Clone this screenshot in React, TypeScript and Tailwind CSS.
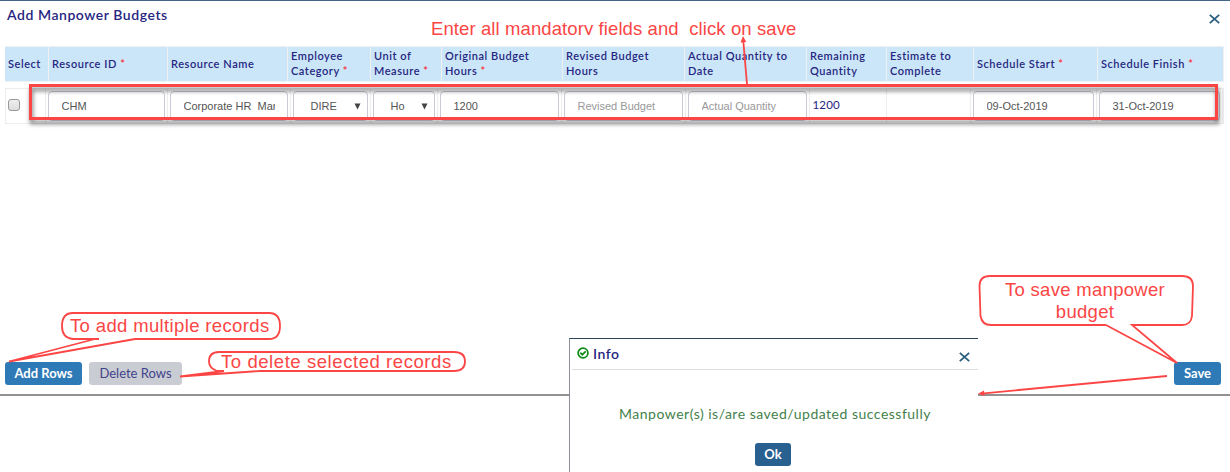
import type { ReactNode } from "react";

const headers: { lines: string[]; required?: boolean }[] = [
  { lines: ["Select"] },
  { lines: ["Resource ID"], required: true },
  { lines: ["Resource Name"] },
  { lines: ["Employee", "Category"], required: true },
  { lines: ["Unit of", "Measure"], required: true },
  { lines: ["Original Budget", "Hours"], required: true },
  { lines: ["Revised Budget", "Hours"] },
  { lines: ["Actual Quantity to", "Date"] },
  { lines: ["Remaining", "Quantity"] },
  { lines: ["Estimate to", "Complete"] },
  { lines: ["Schedule Start"], required: true },
  { lines: ["Schedule Finish"], required: true },
];

function Cell({ children }: { children?: ReactNode }) {
  return <div className="flex min-w-0 border-r border-[#ededf0] pt-[2px] pr-[2px] pl-[2px]">{children}</div>;
}

function Field({ value, placeholder }: { value?: string; placeholder?: string }) {
  return (
    <input
      defaultValue={value}
      placeholder={placeholder}
      className="h-[30px] w-full min-w-0 rounded-[4px] border border-[#c8c9d9] bg-white px-[12.5px] font-['Liberation_Sans',sans-serif] text-[11px] tracking-normal text-[#555] placeholder:text-[#999]"
    />
  );
}

function Picker({ value }: { value: string }) {
  return (
    <button className="flex h-[30px] w-full items-center justify-between rounded-[4px] border border-[#c8c9d9] bg-white pr-[6px] pl-[16.5px] font-['Liberation_Sans',sans-serif] text-[11px] tracking-normal text-[#555]">
      {value}
      <svg width="7" height="7" viewBox="0 0 7 7" fill="#444">
        <path d="M0.5 0.5H6.5L3.5 6.5Z" />
      </svg>
    </button>
  );
}

function Close({ className }: { className?: string }) {
  return (
    <svg width="11" height="10" viewBox="0 0 11 10" className={className} stroke="#2a607f" strokeWidth="1.8" fill="none">
      <path d="M0.8 0.8L10.2 9.2M10.2 0.8L0.8 9.2" />
    </svg>
  );
}

export default function App() {
  return (
    <div className="relative h-[472px] w-[1230px] overflow-hidden bg-white font-[Lato,sans-serif] text-[#262680]">
      <main className="flex h-[396px] flex-col border-t border-b-2 border-t-[#446688] border-b-[#929292]">
        <header className="flex h-[45px] justify-between pt-[6px] pr-[10px] pl-[7px]">
          <h1 className="text-[14px] leading-[16px] font-semibold tracking-[0.55px]">Add Manpower Budgets</h1>
          <Close className="mt-[7px]" />
        </header>
        <div className="ml-[5px] grid h-[36px] w-[1219px] grid-cols-[44px_119px_120px_83px_71px_121px_122px_122px_80px_87px_124px_126px] border-y border-[#f0f0f0] bg-[#cbe6f9] text-[11px] leading-[15px] font-semibold tracking-[0.55px]">
          {headers.map((h) => (
            <div key={h.lines.join()} className="flex flex-col justify-center border-r border-[#f0f0f0] pb-[2px] pl-[3px] whitespace-nowrap">
              {h.lines.map((line, i) => (
                <span key={line}>
                  {line}
                  {h.required && i === h.lines.length - 1 && <span className="font-semibold text-red-500"> *</span>}
                </span>
              ))}
            </div>
          ))}
        </div>
        <div className="mt-[6px] ml-[5px] grid h-[36px] w-[1219px] grid-cols-[40px_122px_123px_80px_67px_124px_124px_124px_77px_84px_126px_126px] border border-[#ededf0]">
          <Cell>
            <span className="mt-[8px] h-[12px] w-[12px] rounded-[3px] border border-[#999] bg-linear-to-b from-[#eee] to-[#ddd]" />
          </Cell>
          <Cell><Field value="CHM" /></Cell>
          <Cell><Field value="Corporate HR  Manager" /></Cell>
          <Cell><Picker value="DIRE" /></Cell>
          <Cell><Picker value="Ho" /></Cell>
          <Cell><Field value="1200" /></Cell>
          <Cell><Field placeholder="Revised Budget" /></Cell>
          <Cell><Field placeholder="Actual Quantity" /></Cell>
          <Cell><span className="mt-[6px] ml-[0.5px] text-[11.5px] leading-[16px] tracking-[0.2px]">1200</span></Cell>
          <Cell />
          <Cell><Field value="09-Oct-2019" /></Cell>
          <Cell><Field value="31-Oct-2019" /></Cell>
        </div>
        <footer className="mt-auto flex h-[32px] px-[5px] pr-[9px] text-[13px]">
          <button className="h-[23px] w-[77px] rounded-[3px] bg-[#2e7ab6] font-bold text-white">Add Rows</button>
          <button className="ml-[7px] h-[23px] w-[93px] rounded-[3px] bg-[#c9cdd3] text-[#42428b]">Delete Rows</button>
          <button className="ml-auto h-[23px] w-[47px] rounded-[3px] bg-[#2e7ab6] font-bold text-white">Save</button>
        </footer>
      </main>

      <section className="absolute top-[338px] left-[569px] flex h-[134px] w-[409px] flex-col border-t border-l border-t-[#2b465b] border-l-[#8b8f96] bg-white">
        <div className="ml-[2px] flex h-[31px] justify-between border-b border-[#ddd] pt-[6px] pr-[8px] pl-[5px]">
          <div className="flex h-[16px] items-center gap-[4px] text-[14px] font-semibold tracking-[0.5px]">
            <svg width="12" height="12" viewBox="0 0 12 12" fill="none" stroke="#0c8a16" strokeWidth="1.7">
              <circle cx="6" cy="6" r="4.9" />
              <path d="M3.3 5.7L5.3 7.7L8.7 4.3" />
            </svg>
            Info
          </div>
          <Close className="mt-[7px]" />
        </div>
        <p className="mt-[36px] pl-[2px] text-center text-[14px] leading-[16px] tracking-[0.5px] text-[#43814a]">Manpower(s) is/are saved/updated successfully</p>
        <button className="mt-[21px] ml-[185px] h-[23px] w-[36px] shrink-0 rounded-[3px] bg-[#28608f] text-[13px] font-bold text-white">Ok</button>
      </section>

      <div className="absolute top-[84px] left-[29px] h-[36px] w-[1189px] border-[3px] border-[#fb4645] drop-shadow-[1px_4px_2px_rgba(0,0,0,0.55)]" />
      <svg className="absolute inset-0" width="1230" height="472" fill="none" stroke="#fb4645" strokeWidth="1.8">
        <path d="M747 84L743.3 41" />
        <path d="M743 36L746.3 42L740.5 42.5Z" fill="#fb4645" strokeWidth="0" />
        <path d="M99 339H73Q62 338 62 326Q62 313 73 313H269Q280 313 280 326Q280 339 269 339H135L9 361.5L95 339" />
        <path d="M224 371H217Q209 368 209 361.5Q209 352 219 352H454Q465 352 465 361.5Q465 371 454 371H260L180 376.5L224 371" />
        <path d="M1106 325H991Q982 325 980.5 316L979.5 286Q979.5 276 990 276H1182Q1193 276 1193 286L1192 316Q1191 325 1182 325H1132L1177 363L1106 325" />
        <path d="M1167 376L984 393.3" />
        <path d="M978 393.8L984 390.5L984.5 396Z" fill="#fb4645" strokeWidth="0" />
      </svg>
      <div className="font-['Liberation_Sans',sans-serif] text-[18.5px] leading-[22px] whitespace-nowrap text-[#fb4645]">
        <div className="absolute top-[18px] left-[431px] h-[17px] overflow-hidden tracking-[0.1px] whitespace-pre">Enter all mandatory fields and  click on save</div>
        <div className="absolute top-[315px] left-[70px] tracking-[0.36px]">To add multiple records</div>
        <div className="absolute top-[351px] left-[221px] tracking-[0.57px]">To delete selected records</div>
        <div className="absolute top-[279px] left-[979px] w-[212px] text-center tracking-[0.3px]">To save manpower<br />budget</div>
      </div>
    </div>
  );
}
